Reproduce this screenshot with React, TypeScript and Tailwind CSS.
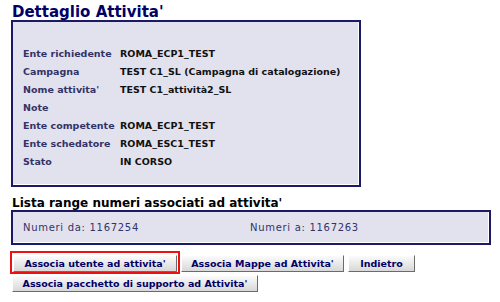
import React from "react";

const rows: [string, string][] = [
  ["Ente richiedente", "ROMA_ECP1_TEST"],
  ["Campagna", "TEST C1_SL (Campagna di catalogazione)"],
  ["Nome attivita'", "TEST C1_attività2_SL"],
  ["Note", ""],
  ["Ente competente", "ROMA_ECP1_TEST"],
  ["Ente schedatore", "ROMA_ESC1_TEST"],
  ["Stato", "IN CORSO"],
];

function Btn({ children, w }: { children: React.ReactNode; w: string }) {
  return (
    <button className={`${w} h-[17px] bg-gradient-to-b from-[#fbfbfb] to-[#d8d8d8] border border-t-white border-l-white border-r-[#6b6b6b] border-b-[#6b6b6b] text-[9.5px] font-bold text-[#000066] leading-none whitespace-nowrap flex items-center justify-center`}>
      {children}
    </button>
  );
}

export default function App() {
  return (
    <div className="w-[500px] h-[302px] bg-white overflow-hidden pl-[11px] pt-[4px]" style={{ fontFamily: '"DejaVu Sans", Verdana, sans-serif' }}>
      <h1 className="text-[15px] font-bold text-[#000066] leading-[16px] pl-[1px]">Dettaglio Attivita'</h1>
      <div className="w-[350px] h-[167px] bg-[#e2e2ee] border-2 border-[#1a1a66] shadow-[inset_-1px_-1px_0_#ffffff] pt-[23px] pl-[10px]">
        <div className="flex flex-col">
          {rows.map(([l, v]) => (
            <div key={l} className="flex h-[18px] items-center text-[9.5px]">
              <span className="w-[97px] font-bold text-[#333366]">{l}</span>
              <span className="font-semibold text-[#111]">{v}</span>
            </div>
          ))}
        </div>
      </div>
      <h2 className="mt-[9px] text-[12px] font-bold text-black leading-[14px] pl-[1px]">Lista range numeri associati ad attivita'</h2>
      <div className="w-[480px] h-[35px] bg-[#e2e2ee] border-2 border-[#1a1a66] shadow-[inset_-1px_-1px_0_#ffffff] flex items-center pl-[10px] text-[10px] tracking-[0.7px] text-[#333366]">
        <span className="w-[227px]">Numeri da: 1167254</span>
        <span>Numeri a: 1167263</span>
      </div>
      <div className="mt-[10px] flex gap-[4px] pl-[2px]">
        <div className="relative">
          <Btn w="w-[164px]">Associa utente ad attivita'</Btn>
          <div className="absolute -left-[3px] -top-[4px] w-[170px] h-[23px] border-2 border-[#ee1111]" />
        </div>
        <Btn w="w-[163px]">Associa Mappe ad Attivita'</Btn>
        <Btn w="w-[67px]">Indietro</Btn>
      </div>
      <div className="mt-[3px] pl-[1px]">
        <Btn w="w-[246px]">Associa pacchetto di supporto ad Attivita'</Btn>
      </div>
    </div>
  );
}
